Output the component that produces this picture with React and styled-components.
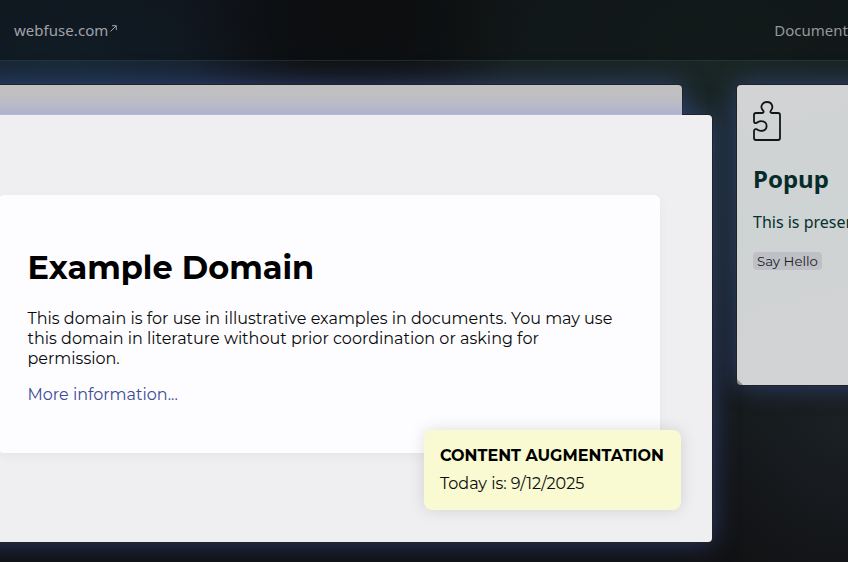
import React from "react";
import styled, { createGlobalStyle } from "styled-components";

const GlobalStyle = createGlobalStyle`
  * { box-sizing: border-box; }
  body { margin: 0; background: #101112; overflow: hidden; }
`;

const Page = styled.div`
  width: 848px;
  height: 562px;
  overflow: hidden;
  background:
    radial-gradient(ellipse 170px 130px at 350px 20px, #101112 0%, rgba(16, 17, 18, 0.85) 40%, transparent 100%),
    radial-gradient(ellipse 400px 180px at 60px 60px, #182a38 0%, #161f2c 55%, transparent 100%),
    radial-gradient(ellipse 440px 400px at 720px 80px, #1a2625 0%, #192323 45%, transparent 100%),
    radial-gradient(ellipse 170px 170px at 848px 430px, #1b2025 0%, transparent 100%),
    #111214;
  font-family: "Noto Sans", sans-serif;
`;

const Header = styled.header`
  display: flex;
  justify-content: space-between;
  align-items: center;
  height: 61px;
  padding-left: 14px;
  border-bottom: 1px solid rgba(125, 145, 145, 0.2);
  background: rgba(9, 11, 14, 0.45);
`;

const NavLink = styled.a`
  display: flex;
  color: ${(p) => p.$color};
  font-size: 15px;
  line-height: 20px;
  letter-spacing: ${(p) => p.$tracking};
  white-space: nowrap;
  svg { margin: 5px 0 0 2px; }
`;

const Workspace = styled.main`
  display: flex;
  gap: 25px;
  padding-top: 24px;
`;

const WindowStack = styled.section`
  flex: 0 0 752px;
  margin-left: -40px;
`;

const glow = "0 0 0 1px #202426, 0 0 26px rgba(64, 87, 162, 0.66)";

const BackWindow = styled.div`
  width: 722px;
  height: 30px;
  border-radius: 4px 4px 0 0;
  background: linear-gradient(#c2c0c1 0%, #bfbfc1 35%, #b8bac8 70%, #afb2cf 96%, #c0c0c6 100%);
  box-shadow: ${glow};
`;

const FrontWindow = styled.div`
  position: relative;
  height: 427px;
  padding: 80px 52px 0 38px;
  border-radius: 0 4px 4px 4px;
  background: #efeff1;
  box-shadow: ${glow};
  clip-path: polygon(0 0, 722px 0, 722px -30px, 800px -30px, 800px 480px, 0 480px);
`;

const Article = styled.article`
  height: 258px;
  padding: 53px 32px 0 29.5px;
  border-radius: 6px;
  background: #fdfdff;
  box-shadow: 0 4px 12px rgba(20, 20, 30, 0.04);
  font-family: Montserrat, Inter, sans-serif;
  color: #090a0b;
`;

const Title = styled.h1`
  margin: 0;
  color: #000;
  font-size: 32px;
  line-height: 39px;
  font-weight: 700;
  white-space: nowrap;
`;

const Copy = styled.p`
  margin: 22px 0 16px;
  font-size: 16px;
  line-height: 20px;
  white-space: nowrap;
`;

const Line = styled.span`
  display: block;
`;

const MoreLink = styled.a`
  display: block;
  color: #3c4a94;
  font-size: 16px;
  line-height: 20px;
`;

const Note = styled.aside`
  position: absolute;
  right: 31px;
  bottom: 32px;
  width: 257px;
  height: 80px;
  padding: 16px;
  border-radius: 8px;
  background: #f9f9d2;
  box-shadow: 0 0 16px rgba(20, 20, 35, 0.13);
  color: #0b0c09;
  font: 16px/20px Montserrat, Inter, sans-serif;
  white-space: nowrap;
`;

const NoteTitle = styled.strong`
  display: block;
  margin-bottom: 8px;
  color: #000;
`;

const Popup = styled.section`
  flex: 0 0 140px;
  height: 300px;
  padding: 16px;
  border-radius: 4px;
  background:
    linear-gradient(45deg, #8f9290 0 4px, transparent 4.5px),
    linear-gradient(165deg, #d2d3d5 0%, #ced3d3 45%, #d2d3d5 80%);
  box-shadow: ${glow};
  color: #08302e;
  white-space: nowrap;
  svg { display: block; }
`;

const PopupTitle = styled.h2`
  margin: 21px 0 0;
  color: #062b2a;
  font-size: 24px;
  line-height: 33px;
`;

const PopupCopy = styled.p`
  margin: 16px 0 19px;
  font-size: 16px;
  line-height: 22px;
`;

const HelloButton = styled.button`
  display: block;
  width: 69px;
  height: 18px;
  padding: 0;
  border: 0;
  border-radius: 4px;
  background: #bec0c6;
  color: #202026;
  font: 13.33px/18px Montserrat, Inter, sans-serif;
`;

const PuzzleIcon = () => (
  <svg width="28" height="40" viewBox="0 0 28 40" fill="none" stroke="#111718" strokeWidth="1.8" strokeLinejoin="round">
    <path d="M3 12H9C11 12 11 10.5 10 9.5C8.5 8 8.2 6.5 8.5 5C9.2 2.5 11.2 1 14 1C16.8 1 18.8 2.8 19.3 5.2C19.6 7 19 8.3 18 9.5C17 10.7 17.2 12 19 12H25Q27 12 27 14V37Q27 39 25 39H3Q1 39 1 37V30Q1 28 3 28.2C5 28.6 5.5 29.9 8 29.9C11.5 29.9 13.6 27.8 13.6 25C13.6 22.2 11.4 20.1 8 20.1C5.4 20.1 5.2 21.5 3 22Q1 22.4 1 20.2V14Q1 12 3 12Z" />
  </svg>
);

export default function App() {
  return (
    <Page>
      <GlobalStyle />
      <Header>
        <NavLink $color="#a0a2a9" $tracking="0.04px">
          webfuse.com
          <svg width="8" height="8" viewBox="0 0 8 8" fill="none" stroke="currentColor">
            <path d="M0.5 6.5L6 1M2 0.7H6.3V5" />
          </svg>
        </NavLink>
        <NavLink $color="#94999b" $tracking="0px">Document</NavLink>
      </Header>
      <Workspace>
        <WindowStack>
          <BackWindow />
          <FrontWindow>
            <Article>
              <Title>Example Domain</Title>
              <Copy>
                <Line>This domain is for use in illustrative examples in documents. You may use</Line>
                <Line>this domain in literature without prior coordination or asking for</Line>
                <Line>permission.</Line>
              </Copy>
              <MoreLink>More information...</MoreLink>
            </Article>
            <Note>
              <NoteTitle>CONTENT AUGMENTATION</NoteTitle>
              Today is: 9/12/2025
            </Note>
          </FrontWindow>
        </WindowStack>
        <Popup>
          <PuzzleIcon />
          <PopupTitle>Popup</PopupTitle>
          <PopupCopy>This is presen</PopupCopy>
          <HelloButton>Say Hello</HelloButton>
        </Popup>
      </Workspace>
    </Page>
  );
}
